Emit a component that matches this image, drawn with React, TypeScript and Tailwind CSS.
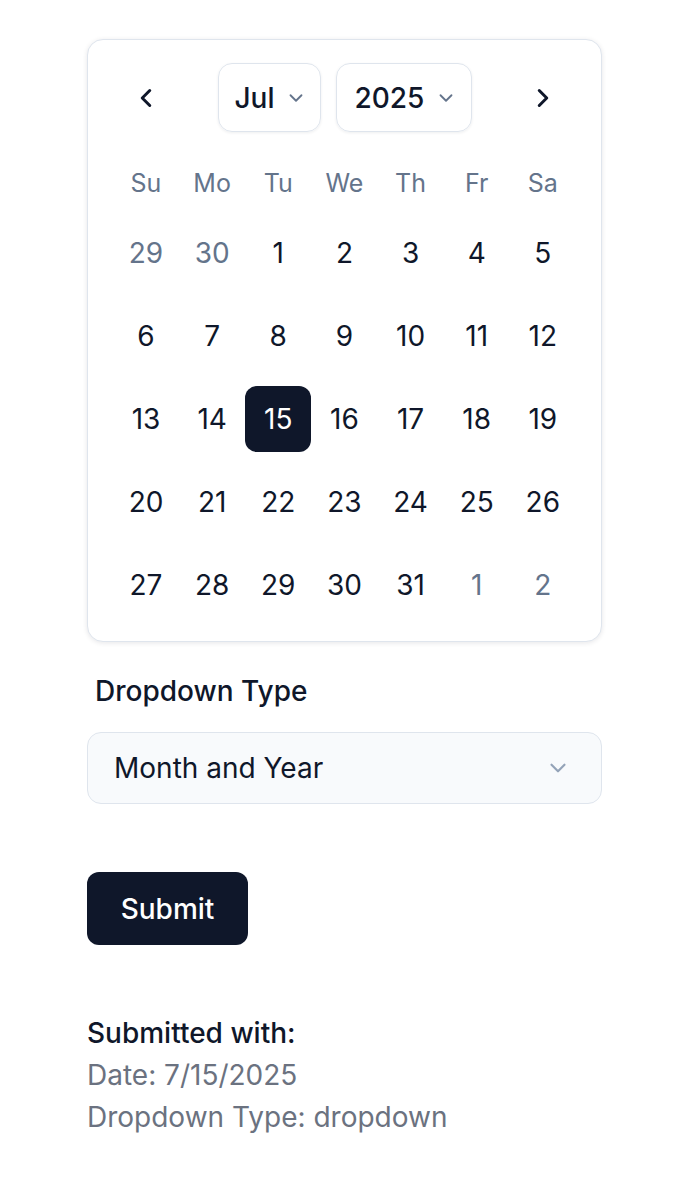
import React from "react";
import { ChevronLeft, ChevronRight, ChevronDown } from "lucide-react";

const weeks: { d: number; out?: boolean; sel?: boolean }[][] = [
  [{ d: 29, out: true }, { d: 30, out: true }, { d: 1 }, { d: 2 }, { d: 3 }, { d: 4 }, { d: 5 }],
  [{ d: 6 }, { d: 7 }, { d: 8 }, { d: 9 }, { d: 10 }, { d: 11 }, { d: 12 }],
  [{ d: 13 }, { d: 14 }, { d: 15, sel: true }, { d: 16 }, { d: 17 }, { d: 18 }, { d: 19 }],
  [{ d: 20 }, { d: 21 }, { d: 22 }, { d: 23 }, { d: 24 }, { d: 25 }, { d: 26 }],
  [{ d: 27 }, { d: 28 }, { d: 29 }, { d: 30 }, { d: 31 }, { d: 1, out: true }, { d: 2, out: true }],
];

const days = ["Su", "Mo", "Tu", "We", "Th", "Fr", "Sa"];

export default function App() {
  return (
    <div
      className="min-h-[1200px] bg-white pt-[39px] pl-[87px] text-[#0f172a]"
      style={{ fontFamily: "Inter, 'Noto Sans', sans-serif" }}
    >
      <div className="w-[515px]">
        <div className="rounded-[16px] border border-[#dfe5ed] bg-white px-[25px] pt-[23px] pb-[23px] shadow-[0_1px_5px_rgba(15,23,42,0.10)]">
          <div className="flex h-[69px] items-center justify-between">
            <div className="flex h-[66px] w-[66px] items-center justify-center">
              <ChevronLeft size={30} strokeWidth={2.4} className="text-[#0f172a]" />
            </div>
            <div className="flex items-center gap-[15px]">
              <div className="flex h-[69px] w-[103px] items-center rounded-[14px] border border-[#dfe5ed] pl-[16px] shadow-[0_1px_3px_rgba(15,23,42,0.07)]">
                <span className="text-[28px] font-medium leading-none">Jul</span>
                <ChevronDown size={22} strokeWidth={2} className="ml-[10px] text-[#64748b]" />
              </div>
              <div className="flex h-[69px] w-[136px] items-center rounded-[14px] border border-[#dfe5ed] pl-[18px] shadow-[0_1px_3px_rgba(15,23,42,0.07)]">
                <span className="text-[28px] font-medium leading-none">2025</span>
                <ChevronDown size={22} strokeWidth={2} className="ml-[11px] text-[#64748b]" />
              </div>
            </div>
            <div className="flex h-[66px] w-[66px] items-center justify-center">
              <ChevronRight size={30} strokeWidth={2.4} className="text-[#0f172a]" />
            </div>
          </div>
          <div className="mt-[32px] grid grid-cols-7">
            {days.map((d) => (
              <div key={d} className="flex h-[40px] w-[66px] items-center justify-center text-[25px] text-[#64748b]">
                {d}
              </div>
            ))}
          </div>
          <div className="mt-[16px] flex flex-col gap-[17px]">
            {weeks.map((w, i) => (
              <div key={i} className="grid grid-cols-7">
                {w.map((c, j) => (
                  <div
                    key={j}
                    className={
                      c.sel
                        ? "flex h-[66px] w-[66px] items-center justify-center rounded-[12px] bg-[#0f172a] text-[28px] text-white"
                        : c.out
                        ? "flex h-[66px] w-[66px] items-center justify-center text-[28px] text-[#64748b]"
                        : "flex h-[66px] w-[66px] items-center justify-center text-[28px] text-[#0f172a]"
                    }
                  >
                    {c.d}
                  </div>
                ))}
              </div>
            ))}
          </div>
        </div>

        <div className="mt-[29px] pl-[8px] text-[28px] font-medium leading-[40px]">Dropdown Type</div>
        <div className="mt-[21px] flex h-[72px] items-center justify-between rounded-[14px] border border-[#dfe5ed] bg-[#f8fafc] pl-[26px] pr-[30px]">
          <span className="text-[28px] leading-none">Month and Year</span>
          <ChevronDown size={26} strokeWidth={2} className="text-[#94a3b8]" />
        </div>

        <button className="mt-[68px] flex h-[73px] w-[161px] items-center justify-center rounded-[12px] bg-[#0f172a] text-[28px] font-medium text-white">
          Submit
        </button>

        <div className="mt-[67px] text-[28px] leading-[42px]">
          <div className="font-medium text-[#0f172a]">Submitted with:</div>
          <div className="text-[#6b7280]">Date: 7/15/2025</div>
          <div className="text-[#6b7280]">Dropdown Type: dropdown</div>
        </div>
      </div>
    </div>
  );
}
